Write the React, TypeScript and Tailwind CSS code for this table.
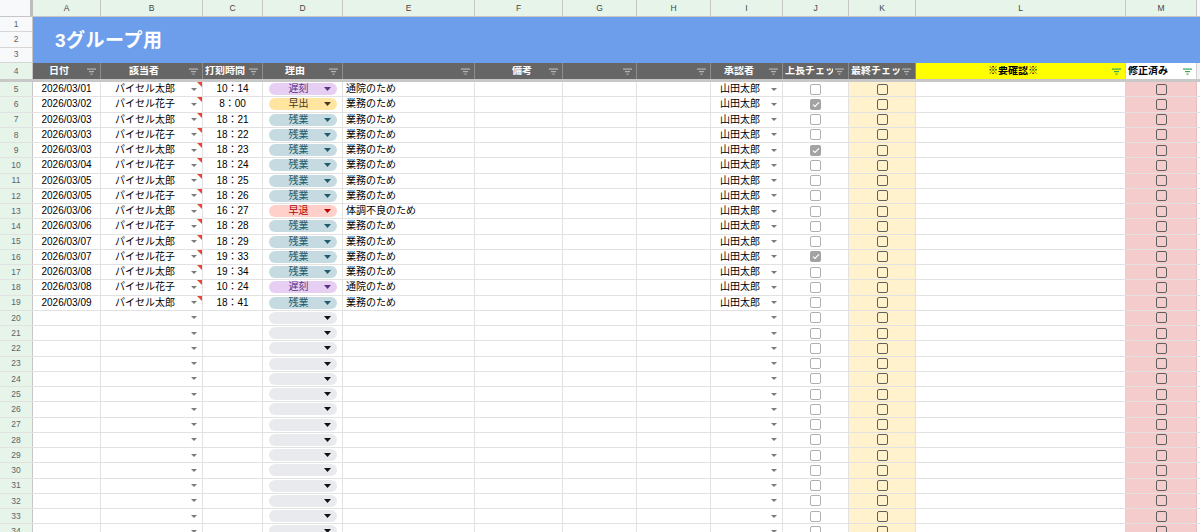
import React from 'react';

type Reason = '遅刻' | '早出' | '残業' | '早退' | '';

interface Entry {
  date: string;
  name: string;
  time: string;
  reason: Reason;
  note: string;
  approver: string;
  checked: boolean;
}

const FONT = { fontFamily: '"Liberation Sans", "Noto Sans CJK JP", sans-serif' };

const LETTERS = ['A', 'B', 'C', 'D', 'E', 'F', 'G', 'H', 'I', 'J', 'K', 'L', 'M'];
const W = [
  'w-[68px]',
  'w-[102px]',
  'w-[60px]',
  'w-[80px]',
  'w-[132px]',
  'w-[88px]',
  'w-[74px]',
  'w-[74px]',
  'w-[72px]',
  'w-[66px]',
  'w-[67px]',
  'w-[210px]',
  'w-[71px]',
];

const raw: [string, string, string, Reason, string, boolean][] = [
  ['2026/03/01', 'パイセル太郎', '10：14', '遅刻', '通院のため', false],
  ['2026/03/02', 'パイセル花子', '8：00', '早出', '業務のため', true],
  ['2026/03/03', 'パイセル太郎', '18：21', '残業', '業務のため', false],
  ['2026/03/03', 'パイセル花子', '18：22', '残業', '業務のため', false],
  ['2026/03/03', 'パイセル太郎', '18：23', '残業', '業務のため', true],
  ['2026/03/04', 'パイセル花子', '18：24', '残業', '業務のため', false],
  ['2026/03/05', 'パイセル太郎', '18：25', '残業', '業務のため', false],
  ['2026/03/05', 'パイセル花子', '18：26', '残業', '業務のため', false],
  ['2026/03/06', 'パイセル太郎', '16：27', '早退', '体調不良のため', false],
  ['2026/03/06', 'パイセル花子', '18：28', '残業', '業務のため', false],
  ['2026/03/07', 'パイセル太郎', '18：29', '残業', '業務のため', false],
  ['2026/03/07', 'パイセル花子', '19：33', '残業', '業務のため', true],
  ['2026/03/08', 'パイセル太郎', '19：34', '残業', '業務のため', false],
  ['2026/03/08', 'パイセル花子', '10：24', '遅刻', '通院のため', false],
  ['2026/03/09', 'パイセル太郎', '18：41', '残業', '業務のため', false],
];

const entries: Entry[] = [
  ...raw.map(([date, name, time, reason, note, checked]) => ({
    date,
    name,
    time,
    reason,
    note,
    approver: '山田太郎',
    checked,
  })),
  ...Array.from({ length: 15 }, () => ({
    date: '',
    name: '',
    time: '',
    reason: '' as Reason,
    note: '',
    approver: '',
    checked: false,
  })),
];

const PILL: Record<string, { box: string; fill: string }> = {
  遅刻: { box: 'bg-[#e6cff2] text-[#5a3286]', fill: '#5a3286' },
  早出: { box: 'bg-[#ffe5a0] text-[#473821]', fill: '#473821' },
  残業: { box: 'bg-[#c6dbe1] text-[#215a6c]', fill: '#215a6c' },
  早退: { box: 'bg-[#ffcfc9] text-[#b10202]', fill: '#b10202' },
  '': { box: 'bg-[#e8eaed] text-black', fill: '#111' },
};

function FilterIcon({ color = '#b5b5b5' }: { color?: string }) {
  return (
    <svg width="9" height="7" viewBox="0 0 9 7" className="shrink-0">
      <rect x="0" y="0.5" width="9" height="1.2" fill={color} />
      <rect x="2" y="3" width="5" height="1.2" fill={color} />
      <rect x="3.5" y="5.5" width="2" height="1.2" fill={color} />
    </svg>
  );
}

function Caret({ color = '#7a7a7a', size = 'sm' }: { color?: string; size?: 'sm' | 'md' }) {
  const w = size === 'sm' ? 6 : 7;
  const h = size === 'sm' ? 3 : 4;
  return (
    <svg width={w} height={h} viewBox={`0 0 ${w} ${h}`} className="shrink-0">
      <polygon points={`0,0 ${w},0 ${w / 2},${h}`} fill={color} />
    </svg>
  );
}

function Chip({ reason }: { reason: Reason }) {
  const s = PILL[reason];
  return (
    <div className={`flex h-[12px] w-[68px] items-center justify-between rounded-full pl-[5px] pr-[6px] ${s.box}`}>
      <span className="flex-1 text-center text-[10px] leading-none">{reason}</span>
      <Caret color={s.fill} size="md" />
    </div>
  );
}

function LightBox({ checked }: { checked: boolean }) {
  if (checked) {
    return (
      <div className="flex h-[11px] w-[11px] items-center justify-center rounded-[2px] bg-[#a3a3a3]">
        <svg width="8" height="7" viewBox="0 0 8 7">
          <path d="M1 3.6 L3 5.5 L7 1.3" stroke="#fff" strokeWidth="1.2" fill="none" />
        </svg>
      </div>
    );
  }
  return <div className="h-[11px] w-[11px] rounded-[2px] border border-[#b0b0b0] bg-white" />;
}

function DarkBox() {
  return <div className="h-[11px] w-[11px] rounded-[2px] border-[1.5px] border-[#5f5f5f]" />;
}

function HeadCell({
  w,
  label,
  tone = 'dark',
  align = 'center',
  pad = '',
}: {
  w: string;
  label?: string;
  tone?: 'dark' | 'yellow' | 'white';
  align?: 'center' | 'left';
  pad?: string;
}) {
  const bg =
    tone === 'dark'
      ? 'bg-[#666666] text-white border-[#8c8c8c]'
      : tone === 'yellow'
        ? 'bg-[#ffff00] text-black border-[#d0d0d0]'
        : 'bg-white text-black border-[#d0d0d0]';
  return (
    <div className={`flex h-full shrink-0 items-center overflow-hidden border-r ${w} ${bg}`}>
      <div className={`flex min-w-0 flex-1 overflow-hidden ${align === 'center' ? 'justify-center' : 'justify-start pl-[2px]'} ${pad}`}>
        {label && <span className="whitespace-nowrap text-[10px] font-bold leading-none">{label}</span>}
      </div>
      <div className="flex h-full shrink-0 items-center pl-[2px] pr-[4px]">
        <FilterIcon color={tone === 'dark' ? '#b5b5b5' : '#34a853'} />
      </div>
    </div>
  );
}

function DataRow({ e, n }: { e: Entry; n: number }) {
  const hasData = e.date !== '';
  const cell = 'relative flex h-full shrink-0 items-center border-r border-[#e2e2e2]';
  return (
    <div className="flex h-[15.25px] border-b border-[#e2e2e2] text-[10px] leading-none text-black">
      <div className="flex h-full w-[33px] shrink-0 items-center justify-center border-r border-[#c6c6c6] bg-[#e6f4ea] text-[8.5px] text-[#5f6368]">
        {n}
      </div>
      <div className={`${cell} ${W[0]} justify-center`}>{e.date}</div>
      <div className={`${cell} ${W[1]} border-[#cfcfcf] justify-between pl-[14px] pr-[5px]`}>
        <span>{e.name}</span>
        <Caret />
        {hasData && (
          <svg width="5" height="5" viewBox="0 0 5 5" className="absolute right-0 top-0">
            <polygon points="0,0 5,0 5,5" fill="#ea4335" />
          </svg>
        )}
      </div>
      <div className={`${cell} ${W[2]} justify-center`}>{e.time}</div>
      <div className={`${cell} ${W[3]} justify-center`}>
        <Chip reason={e.reason} />
      </div>
      <div className={`${cell} ${W[4]} pl-[3px] whitespace-nowrap`}>{e.note}</div>
      <div className={`${cell} ${W[5]}`} />
      <div className={`${cell} ${W[6]}`} />
      <div className={`${cell} ${W[7]} border-[#d4d4d4]`} />
      <div className={`${cell} ${W[8]} border-[#d4d4d4] justify-between pl-[9px] pr-[5px]`}>
        <span>{e.approver}</span>
        <Caret />
      </div>
      <div className={`${cell} ${W[9]} border-[#d4d4d4] justify-center`}>
        <LightBox checked={e.checked} />
      </div>
      <div className={`${cell} ${W[10]} border-[#d4d4d4] justify-center bg-[#fff2cc]`}>
        <DarkBox />
      </div>
      <div className={`${cell} ${W[11]} border-[#e8d0d0]`} />
      <div className={`${cell} ${W[12]} border-[#e6bcbc] justify-center bg-[#f4cccc]`}>
        <DarkBox />
      </div>
      <div className="h-full flex-1 bg-white" />
    </div>
  );
}

export default function App() {
  return (
    <div className="h-[532px] w-[1200px] overflow-hidden bg-white" style={FONT}>
      {/* column letters */}
      <div className="flex h-[17px] border-b border-[#c6c6c6]">
        <div className="h-full w-[33px] shrink-0 border-r-[3px] border-[#bdbdbd] bg-[#f8f9fa]" />
        {LETTERS.map((l, i) => (
          <div
            key={l}
            className={`flex h-full shrink-0 items-center justify-center border-r border-[#c6c6c6] bg-[#e6f4ea] text-[8.5px] text-[#444] ${W[i]}`}
          >
            {l}
          </div>
        ))}
        <div className="h-full flex-1 bg-[#f8f9fa]" />
      </div>

      {/* title rows 1-3 */}
      <div className="flex h-[46px]">
        <div className="flex w-[33px] shrink-0 flex-col border-r border-[#c6c6c6] bg-[#f8f9fa] text-[8.5px] text-[#5f6368]">
          {[1, 2, 3].map((n) => (
            <div key={n} className="flex flex-1 items-center justify-center border-b border-[#d6d6d6]">
              {n}
            </div>
          ))}
        </div>
        <div className="flex h-full flex-1 items-center bg-[#6d9eeb] pl-[22px] pt-[2px]">
          <span className="text-[19px] font-bold tracking-[0.5px] text-white">3グループ用</span>
        </div>
      </div>

      {/* header row 4 */}
      <div className="flex h-[16px]">
        <div className="flex h-full w-[33px] shrink-0 items-center justify-center border-r border-[#c6c6c6] bg-[#e6f4ea] text-[8.5px] text-[#5f6368]">
          4
        </div>
        <HeadCell w={W[0]} label="日付" />
        <HeadCell w={W[1]} label="該当者" />
        <HeadCell w={W[2]} label="打刻時間" />
        <HeadCell w={W[3]} label="理由" />
        <HeadCell w={W[4]} />
        <HeadCell w={W[5]} label="備考" pad="pl-[22px]" />
        <HeadCell w={W[6]} />
        <HeadCell w={W[7]} />
        <HeadCell w={W[8]} label="承認者" />
        <HeadCell w={W[9]} label="上長チェック" align="left" />
        <HeadCell w={W[10]} label="最終チェック" align="left" />
        <HeadCell w={W[11]} label="※要確認※" tone="yellow" />
        <HeadCell w={W[12]} label="修正済み" tone="white" align="left" />
        <div className="h-full flex-1 bg-[#f3f3f3]" />
      </div>

      {/* frozen divider */}
      <div className="h-[3px] bg-[#c8c8c8]" />

      {entries.map((e, i) => (
        <DataRow key={i} e={e} n={i + 5} />
      ))}
    </div>
  );
}
